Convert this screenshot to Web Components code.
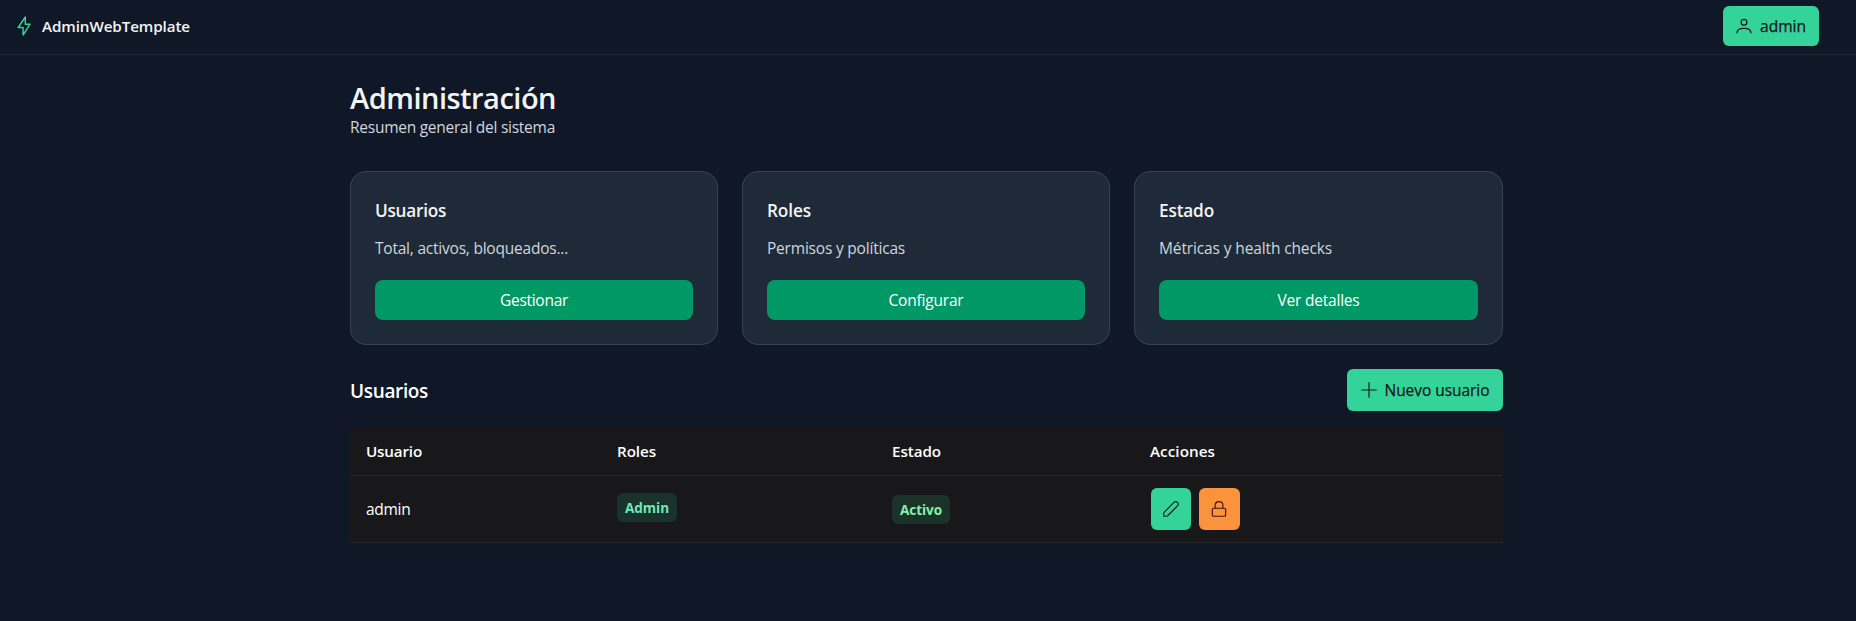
<!DOCTYPE html>
<html lang="es">
<head>
<meta charset="utf-8">
<title>AdminWebTemplate</title>
<style>
html,body{margin:0;background:#101827;color:#f3f4f6;height:621px;overflow:hidden;font-family:"Open Sans","Noto Sans",sans-serif;font-size:15.5px}
</style>
</head>
<body>
<admin-page></admin-page>
<script>
// Text run whose tracking is adjusted so that it spans the given width.
class UiText extends HTMLElement{
  constructor(){super();this.attachShadow({mode:'open'}).innerHTML='<style>:host{display:inline-block;white-space:nowrap;flex:none}</style><slot></slot>'}
  connectedCallback(){
    const fit=()=>{const w=parseFloat(this.getAttribute('w'));if(!w)return;
      this.style.letterSpacing='0px';this.style.width='auto';
      const n=[...this.textContent].length,m=this.getBoundingClientRect().width;
      this.style.letterSpacing=((w-m)/n).toFixed(3)+'px';this.style.width=w+'px'};
    fit();requestAnimationFrame(fit);
  }
}
customElements.define('ui-text',UiText);

const ICONS={
  bolt:'<path d="M5 13.8 13.6 1.2V9.8h5.7L10.9 22.8V13.8Z"/>',
  user:'<circle cx="12" cy="6.3" r="4.3"/><path d="M1.7 23v-1.3c0-3.9 4-6.1 10.3-6.1s10.3 2.2 10.3 6.1V23"/>',
  plus:'<path d="M12 .4v23.2M.4 12h23.2"/>',
  pencil:'<path d="M1.2 22.8V17.4L16.4 2.1a3.6 3.6 0 0 1 5.3 0 3.6 3.6 0 0 1 0 5.3L6.6 22.5Z"/>',
  lock:'<rect x="2" y="10.9" width="20" height="12" rx="2"/><path d="M6.2 10.9V6.8C6.2 3.5 8.6 1 12 1s5.8 2.5 5.8 5.8v4.1"/>'
};
class UiIcon extends HTMLElement{
  constructor(){super();this.attachShadow({mode:'open'})}
  connectedCallback(){const s=this.getAttribute('size')||16;
    this.shadowRoot.innerHTML=`<style>:host{display:block;flex:none}svg{display:block}</style><svg width="${s}" height="${s}" viewBox="0 0 24 24" fill="none" stroke="currentColor" stroke-width="${this.getAttribute('weight')||2}" stroke-linejoin="round" stroke-linecap="butt">${ICONS[this.getAttribute('name')]}</svg>`}
}
customElements.define('ui-icon',UiIcon);

class UiButton extends HTMLElement{
  constructor(){super();this.attachShadow({mode:'open'}).innerHTML=`<style>
  :host{display:flex;box-sizing:border-box;align-items:center;justify-content:center;height:42px;border-radius:6px;background:#34d399;color:#18181b;font-weight:500;line-height:24px;-webkit-text-stroke:.25px currentColor}
  :host([kind=solid]){background:#009966;color:#fff;font-weight:400;height:40px;border-radius:8px;-webkit-text-stroke:0}
  :host([kind=warn]){background:#fb923c;color:#431407}
  </style><slot></slot>`}
}
customElements.define('ui-button',UiButton);

class UiTag extends HTMLElement{
  constructor(){super();this.attachShadow({mode:'open'}).innerHTML=`<style>
  :host{display:inline-flex;box-sizing:border-box;height:29px;align-items:center;padding-left:8px;border-radius:6px;font-size:13.6px;font-weight:700;line-height:20px;background:#1a322c;color:#6ee7b7}
  :host([kind=ok]){background:#1b3228;color:#86efac}
  </style><slot></slot>`}
}
customElements.define('ui-tag',UiTag);

class AppHeader extends HTMLElement{
  constructor(){super();this.attachShadow({mode:'open'}).innerHTML=`<style>
  :host{display:flex;box-sizing:border-box;height:55px;border-bottom:1px solid #1f2937;padding:6px 37px 8px 14px;justify-content:space-between}
  .brand{display:flex;align-items:center;height:40px;gap:8px;font-weight:600;font-size:15.2px;line-height:24px}
  .brand ui-icon{color:#34d399}
  ui-button{width:96px;height:40px;gap:8px;font-size:15.6px}
  </style><div class="brand"><ui-icon name="bolt" size="20" weight="1.7"></ui-icon><ui-text w="148">AdminWebTemplate</ui-text></div>
  <ui-button><ui-icon name="user" weight="1.9"></ui-icon><ui-text w="46">admin</ui-text></ui-button>`}
}
customElements.define('app-header',AppHeader);

class SummaryCard extends HTMLElement{
  constructor(){super();this.attachShadow({mode:'open'}).innerHTML=`<style>
  :host{display:block;box-sizing:border-box;height:174px;padding:24px;border:1px solid #364153;border-radius:16px;background:#1f2a38}
  .t{display:flex;box-sizing:border-box;height:29px;padding-top:1px;align-items:center;font-weight:600;font-size:17.2px;line-height:28px}
  .d{display:flex;height:24px;align-items:center;color:#d1d5db;line-height:24px;margin:11px 0 20px}
  </style><div class="t"><slot name="title"></slot></div><div class="d"><slot></slot></div><ui-button kind="solid"><slot name="action"></slot></ui-button>`}
}
customElements.define('summary-card',SummaryCard);

class UserTable extends HTMLElement{
  constructor(){super();this.attachShadow({mode:'open'}).innerHTML=`<style>
  :host{display:block;background:#18181b;color:#fff}
  .row{display:grid;grid-template-columns:251px 275px 258px 1fr;box-sizing:border-box;border-bottom:1px solid #27272a;align-items:center;line-height:24px}
  .row>*{padding-left:16px;display:flex;align-items:center}
  .head{height:49px;font-weight:600;font-size:15.2px}
  .body{height:67px}
  .row .acts{gap:8px;padding-left:17px}
  .acts ui-button{width:40px}.acts ui-button+ui-button{width:41px}
  .acts ui-button+ui-button ui-icon{margin-right:1px}
  .role{margin-top:-3px}.state{margin-top:1px}
  </style>
  <div class="row head"><div><ui-text w="56">Usuario</ui-text></div><div><ui-text w="39">Roles</ui-text></div><div><ui-text w="49">Estado</ui-text></div><div><ui-text w="65">Acciones</ui-text></div></div>
  <div class="row body"><div><ui-text w="44.5">admin</ui-text></div>
  <div class="role"><ui-tag style="width:60px"><ui-text w="44">Admin</ui-text></ui-tag></div>
  <div class="state"><ui-tag kind="ok" style="width:58px"><ui-text w="42">Activo</ui-text></ui-tag></div>
  <div class="acts"><ui-button><ui-icon name="pencil" weight="1.7"></ui-icon></ui-button><ui-button kind="warn"><ui-icon name="lock" weight="1.7"></ui-icon></ui-button></div></div>`}
}
customElements.define('user-table',UserTable);

class AdminPage extends HTMLElement{
  constructor(){super();this.attachShadow({mode:'open'}).innerHTML=`<style>
  :host{display:block}
  main{width:1153px;margin-left:350px;padding-top:25px}
  h1{margin:0;height:35px;line-height:36px;font-size:29px;font-weight:600;display:flex}
  .sub{display:flex;height:24px;line-height:24px;color:#d1d5db;margin-bottom:32px}
  .cards{display:grid;grid-template-columns:368px 368px 369px;gap:24px;margin-bottom:24px}
  .bar{display:flex;justify-content:space-between;align-items:center;height:42px;margin-bottom:16px}
  h2{margin:0;padding-top:2px;font-size:19px;line-height:28px;font-weight:600;display:flex;color:#fff}
  .bar ui-button{width:156px;gap:8px}
  </style><app-header></app-header>
  <main>
  <h1><ui-text w="206">Administración</ui-text></h1>
  <div class="sub"><ui-text w="205">Resumen general del sistema</ui-text></div>
  <div class="cards">
  <summary-card><ui-text slot="title" w="71">Usuarios</ui-text><ui-text w="193">Total, activos, bloqueados...</ui-text><ui-text slot="action" w="68">Gestionar</ui-text></summary-card>
  <summary-card><ui-text slot="title" w="44">Roles</ui-text><ui-text w="138">Permisos y políticas</ui-text><ui-text slot="action" w="75">Configurar</ui-text></summary-card>
  <summary-card><ui-text slot="title" w="55">Estado</ui-text><ui-text w="173">Métricas y health checks</ui-text><ui-text slot="action" w="82">Ver detalles</ui-text></summary-card>
  </div>
  <div class="bar"><h2><ui-text w="78">Usuarios</ui-text></h2><ui-button><ui-icon name="plus" weight="1.7"></ui-icon><ui-text w="105">Nuevo usuario</ui-text></ui-button></div>
  <user-table></user-table>
  </main>`}
}
customElements.define('admin-page',AdminPage);
</script>
</body>
</html>
